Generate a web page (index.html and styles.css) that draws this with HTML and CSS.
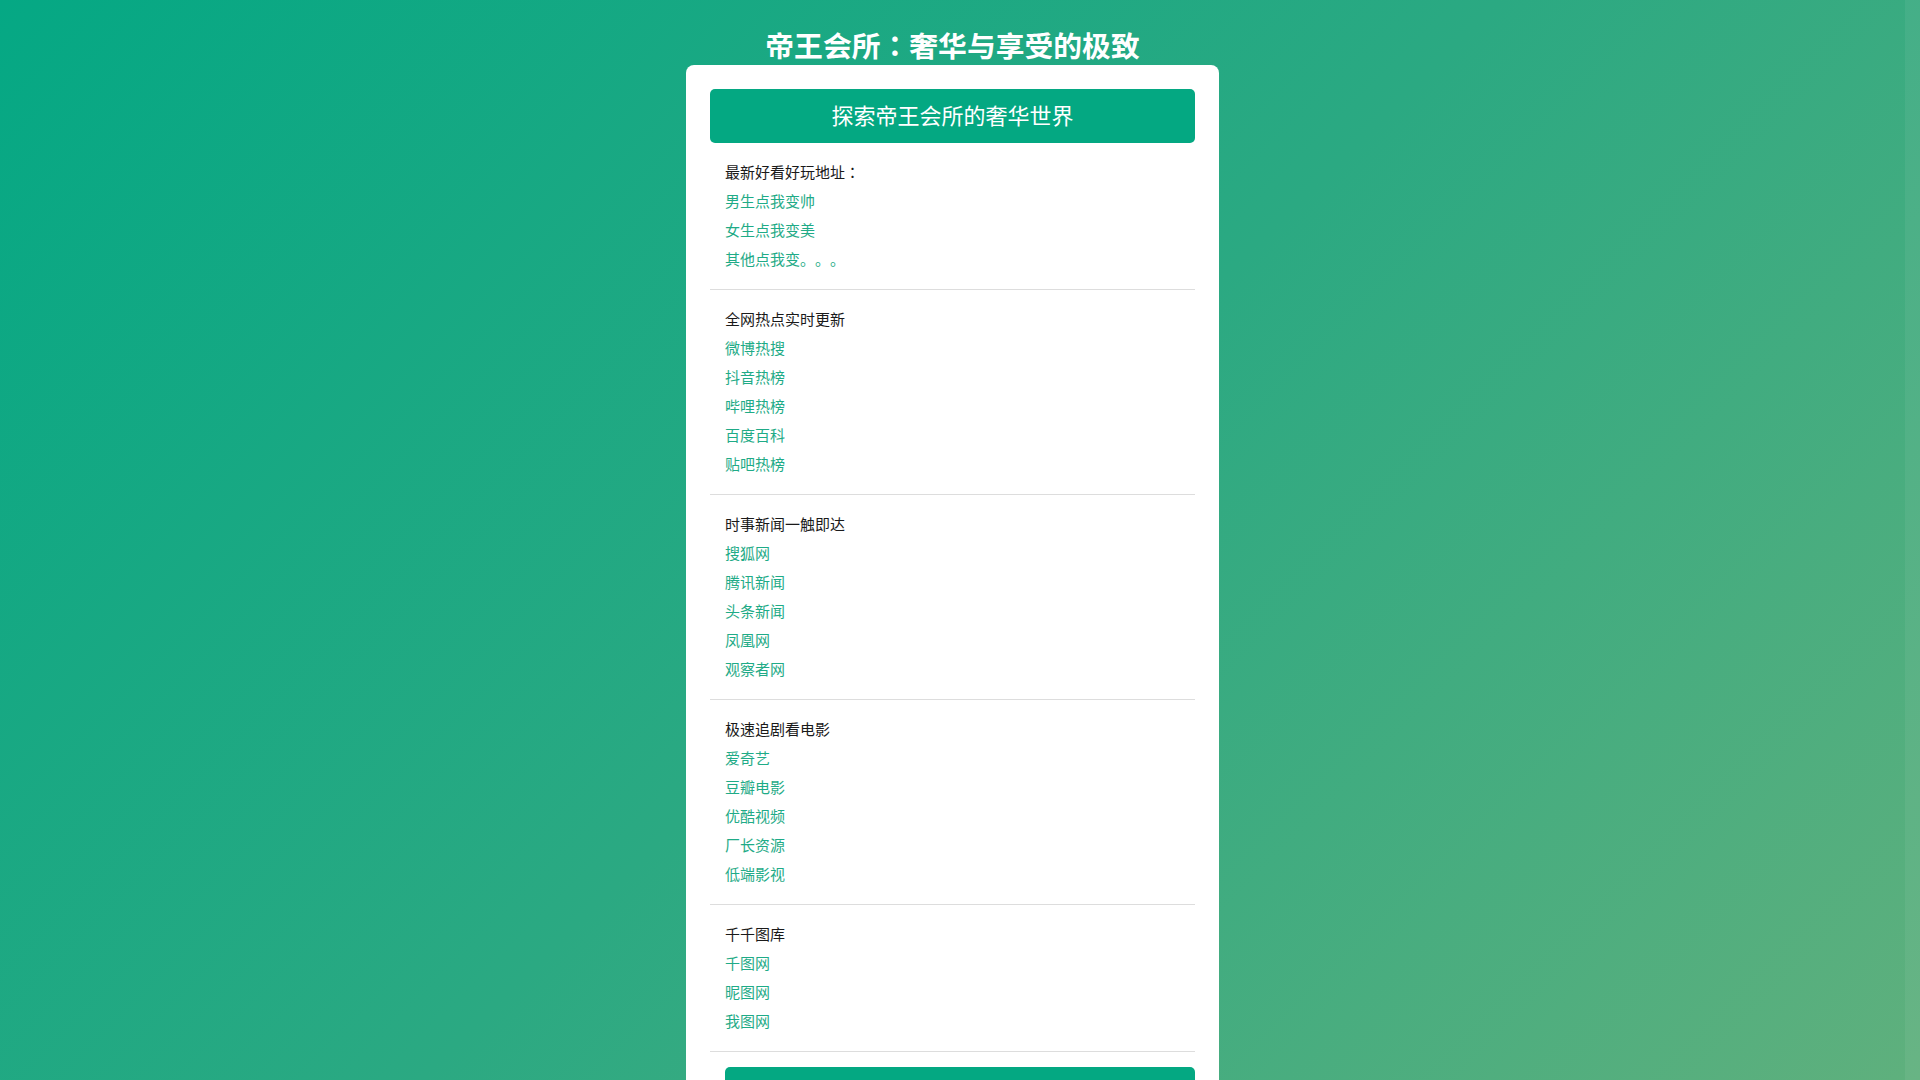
FILE: index.html
```html
<!DOCTYPE html>
<html lang="zh-CN">
<head>
<meta charset="utf-8">
<title>帝王会所：奢华与享受的极致</title>
<link rel="stylesheet" href="styles.css">
</head>
<body>
<h1 class="site-title">帝王会所<span class="punct" lang="ja">：</span>奢华与享受的极致</h1>
<main class="card">
  <div class="banner">探索帝王会所的奢华世界</div>
  <section class="group">
    <div class="group-title">最新好看好玩地址<span class="punct" lang="ja">：</span></div>
    <a class="link" href="#">男生点我变帅</a>
    <a class="link" href="#">女生点我变美</a>
    <a class="link" href="#">其他点我变。。。</a>
  </section>
  <section class="group">
    <div class="group-title">全网热点实时更新</div>
    <a class="link" href="#">微博热搜</a>
    <a class="link" href="#">抖音热榜</a>
    <a class="link" href="#">哔哩热榜</a>
    <a class="link" href="#">百度百科</a>
    <a class="link" href="#">贴吧热榜</a>
  </section>
  <section class="group">
    <div class="group-title">时事新闻一触即达</div>
    <a class="link" href="#">搜狐网</a>
    <a class="link" href="#">腾讯新闻</a>
    <a class="link" href="#">头条新闻</a>
    <a class="link" href="#">凤凰网</a>
    <a class="link" href="#">观察者网</a>
  </section>
  <section class="group">
    <div class="group-title">极速追剧看电影</div>
    <a class="link" href="#">爱奇艺</a>
    <a class="link" href="#">豆瓣电影</a>
    <a class="link" href="#">优酷视频</a>
    <a class="link" href="#">厂长资源</a>
    <a class="link" href="#">低端影视</a>
  </section>
  <section class="group">
    <div class="group-title">千千图库</div>
    <a class="link" href="#">千图网</a>
    <a class="link" href="#">昵图网</a>
    <a class="link" href="#">我图网</a>
  </section>
  <div class="footer-bar"></div>
</main>
<div class="scroll-track"></div>
</body>
</html>
```
FILE: styles.css
```css
html {
  background: linear-gradient(135deg, #05a884 0%, #2ba982 50%, #5fb07d 100%) fixed;
}
body {
  margin: 0;
  padding-right: 15px;
  font-family: "Noto Sans CJK SC", "Noto Sans", "Liberation Sans", sans-serif;
  color: #222;
  text-spacing-trim: space-all;
}
.punct {
  font-family: "Noto Sans CJK JP", "Noto Sans CJK SC", sans-serif;
}
.site-title {
  margin: 0;
  padding-top: 25px;
  font-size: 28.8px;
  line-height: 40px;
  font-weight: bold;
  color: #fff;
  text-align: center;
}
.card {
  display: block;
  width: 533px;
  box-sizing: border-box;
  margin: 0 auto 20px;
  padding: 24px 24px 24px;
  background: #fff;
  border-radius: 8px;
}
.banner {
  height: 54px;
  display: flex;
  align-items: center;
  justify-content: center;
  padding-bottom: 4px;
  box-sizing: border-box;
  background: #04a882;
  color: #fff;
  font-size: 22px;
  border-radius: 5px;
}
.group {
  display: flex;
  flex-direction: column;
  padding: 14px 15px 16px;
  border-bottom: 1px solid #dddddd;
}
.group-title {
  font-size: 15px;
  line-height: 29px;
  color: #1a1a1a;
}
.link {
  font-size: 15px;
  line-height: 29px;
  color: #1fab87;
  text-decoration: none;
}
.footer-bar {
  margin: 15px 0 0 15px;
  height: 54px;
  background: #04a882;
  border-radius: 5px;
}
.scroll-track {
  position: fixed;
  top: 0;
  right: 0;
  width: 15px;
  height: 100vh;
  background: rgba(255, 255, 255, 0.06);
}
```
